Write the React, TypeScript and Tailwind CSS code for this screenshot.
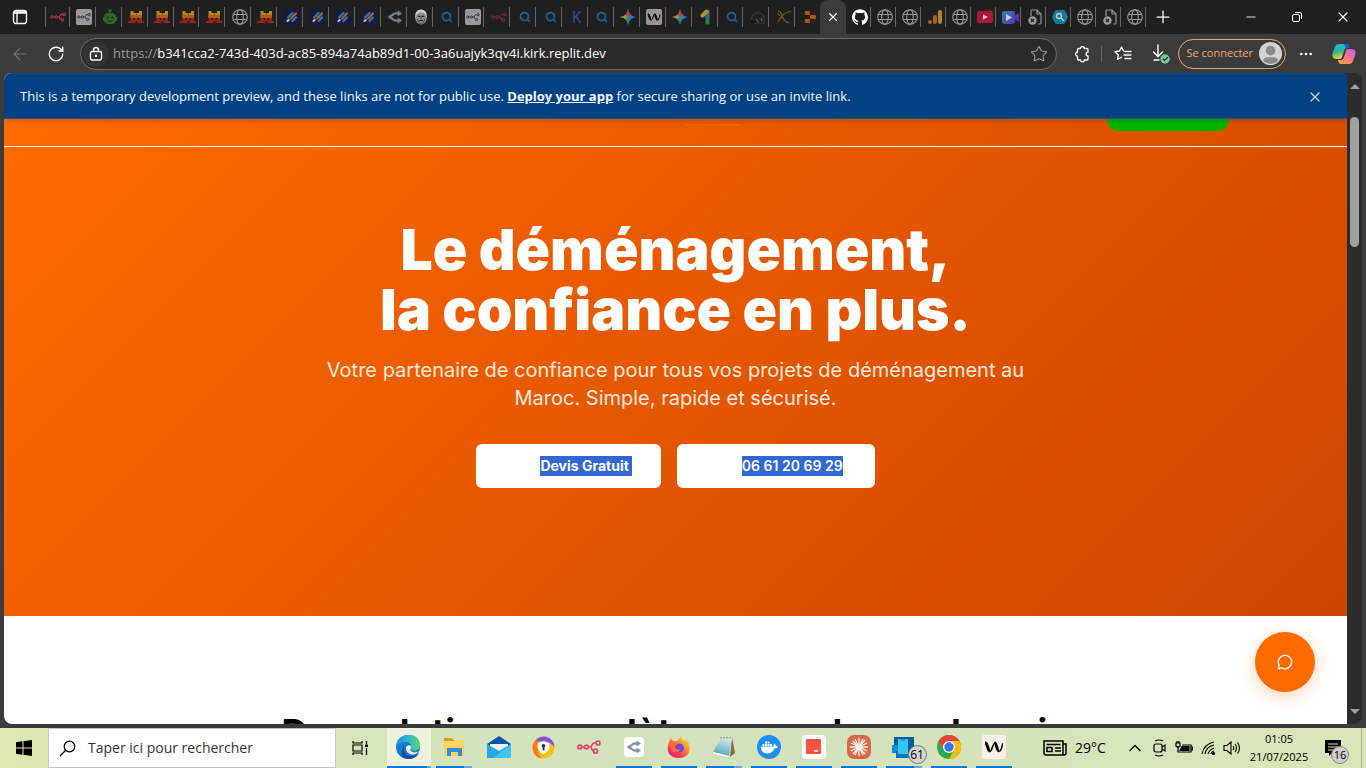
import React from "react";
import {
  ArrowLeft, RotateCw, Star, X, Plus, Minus, Ellipsis, Search, Globe, ChevronUp, MessageCircle,
} from "lucide-react";
import { SiGithub } from "react-icons/si";

type IconProps = { className?: string };

const N8n = ({ className = "" }: IconProps) => (
  <svg viewBox="0 0 24 14" fill="none" stroke="currentColor" strokeWidth="1.7" className={className}>
    <circle cx="2.800" cy="7" r="1.900" /><circle cx="9.500" cy="7" r="1.900" />
    <circle cx="21" cy="3" r="2" /><circle cx="18.500" cy="11.200" r="2" />
    <path d="M4.700 7h2.900M11.400 7h2c1.500 0 1.200-4 3.600-4h2M13.400 7c1.500 0 1.200 4 3.100 4.200" />
  </svg>
);

const Robot = () => (
  <svg viewBox="0 0 16 16" className="size-4 text-[#2e6b1f]" fill="currentColor">
    <path d="M7.300 1h1.400v4H7.300z" /><circle cx="8" cy="1.500" r="1.500" />
    <rect x="2" y="4" width="12" height="11" rx="4.500" /><path d="M1 8h2v4H1zM13 8h2v4h-2z" />
    <circle cx="5.500" cy="8.500" r="1" fill="#202020" /><circle cx="10.500" cy="8.500" r="1" fill="#202020" />
    <path d="M5.500 11.500q2.500 2 5 0" stroke="#202020" fill="none" />
  </svg>
);

const Pixel = () => (
  <svg viewBox="0 0 16 14" className="h-3.5 w-4">
    <path d="M2.500 1h3v2H8v2h.5V3H11V1h3v7H2.500z" fill="#b58a1a" />
    <path d="M2.500 5h11.500v3H2.500z" fill="#b0591a" />
    <path d="M2.500 8h3v2H7V8h2.500v2H11V8h3v3h2v2H9.500v-2h-2v2H0v-2h2.500z" fill="#98231a" />
  </svg>
);

const Stripes = () => (
  <svg viewBox="0 0 16 16" className="size-4">
    <rect width="16" height="16" fill="#171c3f" />
    <g strokeWidth="2.200" strokeLinecap="round">
      <path d="M4 8.500L8.500 4" stroke="#2b7ab8" /><path d="M7 9.500L12 4.500" stroke="#b9601f" />
      <path d="M8.500 12L12 8.500" stroke="#2b7ab8" /><path d="M3.500 12l1.200-1" stroke="#bbb" />
    </g>
  </svg>
);

const Fork = ({ className = "" }: IconProps) => (
  <svg viewBox="0 0 18 16" className={className} fill="none" stroke="currentColor" strokeWidth="2.600">
    <path d="M13 4H9.500C6.500 4 6 8 1.500 8 6 8 6.500 12 9.500 12H13" />
    <path d="M12 .5l5 3.500-5 3.500zM12 8.500l5 3.500-5 3.500z" fill="currentColor" stroke="none" />
  </svg>
);

const Face = () => (
  <svg viewBox="0 0 16 16" className="size-4">
    <ellipse cx="8" cy="8" rx="6" ry="7.500" fill="#8a8a8a" />
    <path d="M2.500 9Q1 1 8 .5 15 1 13.500 9L12 5Q9 2.500 5 4.500L3.500 6z" fill="#c8c8c8" />
    <path d="M4.800 7.300h2.500M8.800 7.300h2.500M6 12q2-1.500 4 0" stroke="#222" strokeWidth="1.200" fill="none" />
    <path d="M8 7v3.500M4 10q1 4 4 5.200M12 10q-1 4-4 5.200" stroke="#444" fill="none" />
  </svg>
);

const Lens = () => <Search className="size-3 text-[#1c629c]" strokeWidth={3.500} />;

const Spark = () => (
  <svg viewBox="0 0 16 16" className="size-4">
    <path d="M8 0q1 7 8 8-7 1-8 8-1-7-8-8 7-1 8-8" fill="#3a72bb" />
    <path d="M8 0q.7 4 3 6L8 7.500 5 6Q7.300 4 8 0" fill="#b04442" />
    <path d="M0 8q3.600-.6 5.500-2.300L7.500 8l-2 2.300Q3.600 8.600 0 8" fill="#a8932c" />
    <path d="M8 16q-.6-3.800-2.500-5.700L8 8.500l2.200 2Q8.600 12.400 8 16" fill="#2b8f4e" />
  </svg>
);

const Wave = ({ className = "" }: IconProps) => (
  <svg viewBox="0 0 20 12" className={className} fill="none" stroke="currentColor" strokeLinejoin="round">
    <path d="M1 2c3 0 2.500 8 5 8" strokeWidth="3" /><path d="M6 10.300C8 10 9 2 11 2" strokeWidth="1.500" />
    <path d="M10.500 2c2.500 0 2 8 4.500 8" strokeWidth="3" /><path d="M15 10.300c2 0 3-4 3.700-8" strokeWidth="1.500" />
  </svg>
);

const One = () => (
  <svg viewBox="0 0 16 16" className="size-4" fill="none" strokeWidth="4">
    <path d="M9.500 15.500V8" stroke="#25813d" /><path d="M9.500 8.500V1" stroke="#3468c0" /><path d="M4.500 6.500l4-4" stroke="#b5941c" strokeLinecap="round" />
  </svg>
);

const Hut = () => (
  <svg viewBox="0 0 16 16" className="size-4" fill="none" stroke="#3a3a34" strokeWidth="1.200">
    <path d="M2 11V7l6-4 6 4v7H4" /><path d="M6 10l2 3M11 9l1 3" stroke="#706822" /><path d="M1 12.500h5" stroke="#111" strokeWidth="2" />
  </svg>
);

const Bow = () => (
  <svg viewBox="0 0 16 16" className="size-4" fill="none" stroke="#7a551b" strokeWidth="1.200">
    <path d="M2 2q3 0 4 5c1 3 3 6 7 7M2 13L6 7q4-4 9-4.500M2 4l2 3" />
  </svg>
);

const Replit = () => (
  <svg viewBox="0 0 16 16" className="size-4" fill="#b9500f">
    <rect x="3" y="2" width="5" height="4" rx="1" /><rect x="8" y="6" width="6" height="4" rx="1" /><rect x="3" y="10" width="5" height="4" rx="1" />
  </svg>
);

const GlobeTab = () => (
  <svg viewBox="0 0 16 16" className="size-4" fill="none" stroke="#999" strokeWidth="1.100">
    <circle cx="8" cy="8" r="7.300" /><ellipse cx="8" cy="8" rx="3.300" ry="7.300" /><path d="M1.500 5.500h13M1.500 10.500h13" />
  </svg>
);

const Bars = () => (
  <svg viewBox="0 0 16 16" className="size-4">
    <circle cx="3" cy="13" r="2" fill="#a8611e" /><rect x="6" y="6" width="4" height="9" rx="2" fill="#a8611e" /><rect x="11" y="1" width="4" height="14" rx="2" fill="#b3831c" />
  </svg>
);

const Tube = () => (
  <svg viewBox="0 0 16 12" className="h-3 w-4"><rect width="16" height="12" rx="2" fill="#a81733" /><path d="M6 3.500l5 2.500-5 2.500z" fill="#ccc" /></svg>
);

const Clip = () => (
  <svg viewBox="0 0 18 16" className="h-4 w-5">
    <defs><linearGradient id="clip" x1="0" y1="0" x2="1" y2="1"><stop stopColor="#1d8aa5" /><stop offset="1" stopColor="#5a30b5" /></linearGradient></defs>
    <rect x="1" y="2" width="13" height="13" rx="3" fill="url(#clip)" /><path d="M13 7l5-3v9l-5-3z" fill="#5a2fae" /><path d="M5 5l6 3.500L5 12z" fill="#ccc" />
  </svg>
);

const BrokenDoc = () => (
  <svg viewBox="0 0 16 16" className="size-4" fill="none" stroke="#909090" strokeWidth="1.200">
    <path d="M4 7V2q0-1 1-1h5l4 4v9q0 1-1 1h-2M10 1v4h4" /><circle cx="5.500" cy="11.500" r="4.200" fill="#999" stroke="none" />
    <path d="M4 10l3 3M7 10l-3 3" stroke="#202020" />
  </svg>
);

const HexSearch = () => (
  <svg viewBox="0 0 16 16" className="size-4" fill="none">
    <path d="M4.500 1h7q1 0 1.500 1l3 6-3 6q-.5 1-1.500 1h-7q-1 0-1.500-1L0 8l3-6q.5-1 1.500-1" fill="#157c98" /><circle cx="7" cy="7" r="2.500" stroke="#ccc" strokeWidth="1.300" /><path d="M9 9l3 3" stroke="#ccc" strokeWidth="1.300" />
  </svg>
);

const N8nTile = () => <span className="flex size-4 items-center justify-center rounded-xs bg-[#999]"><N8n className="h-2 w-3.5 text-[#334]" /></span>;
const LetterK = () => <span className="text-base leading-4 text-[#2a509e]">K</span>;
const WTile = () => <span className="flex size-4 items-center justify-center rounded-xs bg-[#9a9591]"><Wave className="h-2.5 w-3.5 text-black" /></span>;
const N8nRed = () => <N8n className="h-2.5 w-4 text-[#bb2e54]" />;
const N8nDim = () => <N8n className="h-2.5 w-4 text-[#7a2a40]" />;
const ForkTab = () => <Fork className="h-4 w-4 text-[#767b84]" />;
const Hub = () => <SiGithub className="size-4 text-white" />;

const leftTabs = [
  N8nRed, N8nTile, Robot, Pixel, Pixel, Pixel, Pixel, GlobeTab, Pixel, Stripes, Stripes, Stripes, Stripes, ForkTab, Face,
  Lens, N8nTile, N8nDim, Lens, Lens, LetterK, Lens, Spark, WTile, Spark, One, Lens, Hut, Bow, Replit,
];
const rightTabs = [Hub, GlobeTab, GlobeTab, Bars, GlobeTab, Tube, Clip, BrokenDoc, HexSearch, GlobeTab, BrokenDoc, GlobeTab];

const Copilot = () => (
  <svg viewBox="0 0 24 22" className="h-5.5 w-6">
    <defs>
      <linearGradient id="cpa" x1="0" y1="0" x2=".3" y2="1"><stop stopColor="#1ab3f5" /><stop offset=".55" stopColor="#2fb58f" /><stop offset="1" stopColor="#f0cf24" /></linearGradient>
      <linearGradient id="cpb" x1="1" y1="0" x2=".3" y2="1"><stop stopColor="#b561ee" /><stop offset=".5" stopColor="#f36b9b" /><stop offset="1" stopColor="#fb9a50" /></linearGradient>
    </defs>
    <path d="M7 1h8c2 0 2.500 2 3 4h-3c-2 0-2.500 1-3 3l-2 6c-.5 2-1.500 2-3 2H4c-4 0-4-4-3-7l2-5c.7-2 2-3 4-3" fill="url(#cpa)" />
    <path d="M12 1h3c2 0 2.500 2 3 4h-4z" fill="#2357ca" />
    <path d="M17 21H9c-2 0-2.500-2-3-4h3c2 0 2.500-1 3-3l2-6c.5-2 1.500-2 3-2h3c4 0 4 4 3 7l-2 5c-.7 2-2 3-4 3" fill="url(#cpb)" />
  </svg>
);

function TabStrip() {
  return (
    <div className="flex h-[34px] shrink-0 items-stretch bg-[#202020] text-white">
      <button aria-label="Tab actions" className="flex w-11 items-center justify-center pr-1">
        <svg viewBox="0 0 16 16" className="size-4" fill="none" stroke="white" strokeWidth="1.300">
          <rect x="1.500" y="1.500" width="13" height="13" rx="2.500" /><path d="M2 3h12M2 4h12M5 4v10" />
        </svg>
      </button>
      <div className="flex min-w-0 flex-[776] items-center border-l border-transparent">
        {leftTabs.map((Icon, i) => (
          <button key={i} aria-label={"Tab " + (i + 1)} className={i === 0 ? "flex h-5 min-w-0 flex-1 items-center justify-center border-x border-[#666] pl-0.5" : i === 29 ? "flex h-5 min-w-0 flex-1 items-center justify-center pl-1" : "flex h-5 min-w-0 flex-1 items-center justify-center border-r border-[#666] pl-1"}>
            <Icon />
          </button>
        ))}
      </div>
      <button aria-label="Close tab" className="flex w-[26px] items-center justify-center rounded-t-lg bg-[#3b3b3b]"><X className="size-3.5" strokeWidth={2} /></button>
      <div className="flex min-w-0 flex-[300] items-center">
        {rightTabs.map((Icon, i) => (
          <button key={i} aria-label={"Tab " + (i + 32)} className="flex h-5 min-w-0 flex-1 items-center justify-center border-r border-[#666] pl-1"><Icon /></button>
        ))}
      </div>
      <button aria-label="New tab" className="flex w-[34px] items-center justify-center"><Plus className="size-5 shrink-0" strokeWidth={1.500} /></button>
      <div className="ml-12 flex">
        <button aria-label="Minimize" className="flex w-[46px] items-center justify-center"><Minus className="size-3.5" strokeWidth={1.500} /></button>
        <button aria-label="Restore" className="flex w-[46px] items-center justify-center">
          <svg viewBox="0 0 12 12" className="size-3" fill="none" stroke="white"><rect x="1.500" y="3.500" width="7" height="7" rx="1.500" /><path d="M4 1.500h5q1.500 0 1.500 1.500v5" /></svg>
        </button>
        <button aria-label="Close" className="flex w-[46px] items-center justify-center"><X className="size-4" strokeWidth={1.700} /></button>
      </div>
    </div>
  );
}

function Toolbar() {
  return (
    <div className="flex h-[39px] shrink-0 items-center bg-[#3b3b3b] text-white">
      <button aria-label="Back" className="flex w-10 justify-center text-[#777]"><ArrowLeft className="size-5" strokeWidth={1.300} /></button>
      <button aria-label="Refresh" className="flex w-8 justify-center"><RotateCw className="size-[18px]" strokeWidth={1.800} /></button>
      <div className="ml-2 flex h-8 min-w-0 flex-1 items-center rounded-full border border-[#6c6c6c] bg-[#2a2a2a] pr-2 pl-0.5">
        <span className="flex size-[26px] shrink-0 items-center justify-center rounded-full bg-[#333]">
          <svg viewBox="0 0 14 16" className="h-4 w-3.5" fill="none" stroke="white" strokeWidth="1.300"><rect x="1.500" y="5.500" width="11" height="8.500" rx="1.500" /><path d="M4.500 5V4a2.500 2.500 0 0 1 5 0v1" /><circle cx="7" cy="9.700" r=".6" fill="white" /></svg>
        </span>
        <label htmlFor="url" className="pl-1 text-[13px] text-[#999]">https://</label>
        <input id="url" className="min-w-0 flex-1 bg-transparent text-[13px] font-medium outline-none" defaultValue="b341cca2-743d-403d-ac85-894a74ab89d1-00-3a6uajyk3qv4i.kirk.replit.dev" />
        <button aria-label="Add to favorites"><Star className="size-[18px] text-[#999]" strokeWidth={1.400} /></button>
      </div>
      <button aria-label="Extensions" className="ml-4 flex">
        <svg viewBox="0 0 18 18" className="size-[18px]" fill="none" stroke="white" strokeWidth="1.300" strokeLinejoin="round">
          <path d="M5.500 3.500h2a1.900 1.900 0 0 1 3.800 0H14q1 0 1 1v2.700a1.900 1.900 0 0 0 0 3.800v3q0 1-1 1h-2.700a1.900 1.900 0 0 1-3.800 0h-2q-1 0-1-1V11a1.900 1.900 0 1 1 0-3.800V4.500q0-1 1-1z" />
        </svg>
      </button>
      <span className="ml-2.5 h-4 w-px bg-[#666]" />
      <button aria-label="Favorites" className="ml-3 flex">
        <svg viewBox="0 0 18 18" className="size-[18px]" fill="none" stroke="white" strokeWidth="1.300" strokeLinejoin="round" strokeLinecap="round">
          <path d="M11 6.500L9.500 6 7.500 2l-2 4-4.500.700L4.300 10l-.8 4.500 4-2.200M11.500 6.500H17M10 10h7M11 13.500h6" />
        </svg>
      </button>
      <button aria-label="Downloads" className="ml-5 flex">
        <svg viewBox="0 0 18 20" className="h-5 w-[18px]" fill="none" stroke="white" strokeWidth="1.400" strokeLinecap="round">
          <path d="M6 1v11M1.500 8L6 12.500 10.500 8M2 16h5" /><circle cx="13" cy="15" r="4.700" fill="#79c694" stroke="none" /><path d="M11 15l1.500 1.500L15.500 13.500" stroke="#234" strokeWidth="1.200" />
        </svg>
      </button>
      <button className="ml-2 flex h-[30px] items-center gap-1.5 rounded-full border border-[#f5a468] pr-[3px] pl-2 text-[11px] font-medium text-[#f5a468]">
        Se connecter
        <svg viewBox="0 0 24 24" className="size-[23px]"><circle cx="12" cy="12" r="12" fill="#d5d3d1" /><circle cx="12" cy="9" r="5" fill="#8c8a88" /><path d="M4.500 20q0-4 4-4h7q4 0 4 4-7 6-15 0" fill="#8c8a88" /></svg>
      </button>
      <button aria-label="Settings and more" className="ml-3"><Ellipsis className="size-4" strokeWidth={2} /></button>
      <button aria-label="Copilot" className="mr-2.5 ml-[18px]"><Copilot /></button>
    </div>
  );
}

function Page() {
  return (
    <main className="flex min-w-0 flex-1 flex-col overflow-hidden rounded-tl-lg rounded-bl-lg bg-white font-['Inter',sans-serif]">
      <div className="z-10 flex h-[46px] shrink-0 items-center justify-between border-b border-[#1d5087] bg-[#004182] pt-0.5 pr-6 pl-4 font-['Open_Sans',sans-serif] text-[13px] font-medium text-[#f5f9fc] shadow-md">
        <p>This is a temporary development preview, and these links are not for public use. <a href="#deploy" className="font-bold underline">Deploy your app</a> for secure sharing or use an invite link.</p>
        <button aria-label="Dismiss"><X className="size-4 text-[#c7d5e4]" strokeWidth={1.800} /></button>
      </div>
      <section className="flex h-[497px] shrink-0 flex-col bg-[linear-gradient(135deg,#ff6b00,#cc4400)]">
        <header className="flex h-7 shrink-0 items-start justify-end border-b border-white pr-[118px]">
          <span className="mt-[5px] mr-[366px] h-0.5 w-14 bg-[#f06510]" />
          <span className="h-3 w-[122px] rounded-b-[24px] bg-[#00b300]" />
        </header>
        <div className="flex flex-col items-center pt-[73px] text-center text-white">
          <h1 className="text-[57px] leading-[60px] font-black">Le déménagement,<br />la confiance en plus.</h1>
          <p className="mt-4 max-w-3xl text-xl leading-7 text-[#ffeadd]">Votre partenaire de confiance pour tous vos projets de déménagement au<br />Maroc. Simple, rapide et sécurisé.</p>
          <div className="mt-8 flex gap-4 text-sm leading-5 font-bold">
            <button className="h-11 rounded-md bg-white pr-[29px] pl-16"><span className="inline-block bg-[#3367d1] pr-[3px]">Devis Gratuit</span></button>
            <button className="h-11 rounded-md bg-white pr-8 pl-[65px] font-semibold"><span className="inline-block bg-[#3367d1]">06 61 20 69 29</span></button>
          </div>
        </div>
      </section>
      <section className="relative min-h-0 flex-1 overflow-hidden pt-24 text-center">
        <h2 className="text-4xl leading-10 font-bold text-black">Des solutions complètes pour chaque besoin</h2>
        <button aria-label="Chat" className="absolute top-4 right-8 flex size-[60px] items-center justify-center rounded-full bg-[#ff6b00] text-white shadow-[0_4px_16px_rgba(255,107,0,0.3)]"><MessageCircle className="size-4" strokeWidth={2} /></button>
      </section>
    </main>
  );
}

const Edge = () => (
  <svg viewBox="0 0 24 24" className="size-6">
    <defs><linearGradient id="edge"><stop stopColor="#218ddd" /><stop offset=".5" stopColor="#27b8d1" /><stop offset="1" stopColor="#5fd660" /></linearGradient></defs>
    <circle cx="12" cy="12" r="12" fill="#147bd1" />
    <path d="M0 12C1-4 24-4 24 10c0 5-5 7-9 5-2-1 0-2 0-4 0-5-11-6-15 1" fill="url(#edge)" />
    <path d="M9 11c-4 5 2 11 8 10 3 0 5-2 6-3-2 4-6 6-11 6-8-1-8-10-3-13" fill="#104b94" />
    <path d="M10 13c0-3 5-4 5-1 0 2-1 2-1 3 2 3 6 3 9 1-4 6-13 4-13-3" fill="#eef3df" />
  </svg>
);
const Explorer = () => (
  <svg viewBox="0 0 22 20" className="h-5 w-[22px]"><path d="M1 1h8l2 2h10v5H1z" fill="#d99c13" /><path d="M1 4h9l2-1h9v16H1z" fill="#ffd467" /><path d="M4 11h15v8h-4v-4H8v4H4z" fill="#368cd8" /></svg>
);
const Mail = () => (
  <svg viewBox="0 0 24 22" className="h-[22px] w-6"><path d="M0 8L12 0l12 8v4H0z" fill="#0757a2" /><path d="M3 8h18v5l-9 4-9-4z" fill="#edf3f6" /><path d="M0 8l12 7 12-7v14H0z" fill="#27a6ea" /><path d="M24 8L6 22h18z" fill="#43c3f8" /></svg>
);
const Shield = () => (
  <svg viewBox="0 0 24 24" className="size-[23px]"><circle cx="12" cy="12" r="11.500" fill="#fbbd19" /><path d="M5 3Q-2 9 2 18q3 5 8 5.400Q5 18 6 6z" fill="#ff7a1c" /><path d="M5 3q4-3 9-2.400 9 2 9.500 11Q18 4 5 6z" fill="#8054e8" /><path d="M12 5.500l6 2q1.500 8-6 11.500-7.500-3.500-6-11.500z" fill="white" /><path d="M12 10v5" stroke="#213557" strokeWidth="2" /><circle cx="12" cy="10.300" r="1.900" fill="#213557" /></svg>
);
const Firefox = () => (
  <svg viewBox="0 0 24 24" className="size-6">
    <defs><linearGradient id="fox" x1="1" y1="0" x2=".2" y2="1"><stop stopColor="#fff044" /><stop offset=".4" stopColor="#ff982f" /><stop offset=".75" stopColor="#ff3b52" /><stop offset="1" stopColor="#e01587" /></linearGradient></defs>
    <path d="M2 7l2-4 2 3 4 0 4-5q1 4 4 5l1-2c7 8 4 19-7 19S-1 15 2 7" fill="url(#fox)" /><circle cx="12.500" cy="13" r="4.500" fill="#7545df" /><path d="M3 7l8 2-4 2q2 5 7 3-4 6-9 2-3-3-2-9" fill="#ff6c32" />
  </svg>
);
const Notepad = () => (
  <svg viewBox="0 0 24 24" className="size-6">
    <defs><linearGradient id="pad" x1=".6" y1="0" x2=".3" y2="1"><stop stopColor="#cfeaea" /><stop offset="1" stopColor="#4fa3b3" /></linearGradient></defs>
    <path d="M20 2l3 16-5 4z" fill="#85714c" /><path d="M9 3h11l-3 18-16-4z" fill="url(#pad)" /><path d="M1 17l16 4v1.300L1 18.500z" fill="white" /><path d="M9 2v1.500m3-1.500v1.500m3-1.500v1.500m3-1.500v1.500" stroke="#777" />
  </svg>
);
const Docker = () => (
  <svg viewBox="0 0 24 24" className="size-6"><circle cx="12" cy="12" r="12" fill="#1d8ff0" /><path d="M4 11.500h12.500q-.5-2 1-3 1.500 1 1.300 2.700 1.400-.2 2.200.3-.8 2-3.500 2Q15 19 9.500 18.500 4 18 4 11.500M5.500 9h2v2h-2zM8 9h2v2H8zM10.500 9h2v2h-2zM13 9h2v2h-2zM8 6.500h2v2H8zM10.500 6.500h2v2h-2z" fill="white" /></svg>
);
const RedBox = () => <svg viewBox="0 0 24 24" className="size-6"><rect width="24" height="24" rx="4" fill="white" /><rect x="4" y="4" width="15" height="15" rx="1" fill="#ff5240" /><path d="M12 16h4" stroke="white" strokeWidth="1.500" /></svg>;
const Claude = () => (
  <svg viewBox="0 0 24 24" className="size-6"><rect width="24" height="24" rx="7" fill="#d66b4b" /><path d="M12 3v18M3 12h18M6 6l12 13M18 5L6 19M8 4l8 16M16 4L8 20M4 8l16 8M4 16l16-8" stroke="#fff0e8" strokeWidth="1.300" /></svg>
);
const Phone = () => (
  <span className="relative"><svg viewBox="0 0 24 24" className="size-6"><path d="M2 2h20v16H2z" fill="#075f9f" /><path d="M0 10h7v8H0z" fill="#178bd3" /><path d="M4 16h13v7H4z" fill="#0871b8" /><rect x="6" y="4" width="10" height="15" fill="#35c6f0" /><path d="M9 5h4" stroke="#086ba4" /></svg><span className="absolute top-2.5 left-4 flex size-[19px] items-center justify-center rounded-full border border-[#777] bg-[#d3d3d3] text-xs font-medium">61</span></span>
);
const Chrome = () => (
  <svg viewBox="0 0 24 24" className="size-6"><circle cx="12" cy="12" r="12" fill="#31a653" /><path d="M1.600 6a12 12 0 0 1 20.800 0H12L7 15z" fill="#e94335" /><path d="M22.400 6A12 12 0 0 1 12 24l5-9-5-9z" fill="#fbbc05" /><circle cx="12" cy="12" r="6" fill="white" /><circle cx="12" cy="12" r="4.700" fill="#3478e9" /></svg>
);
const N8nApp = () => <N8n className="h-3.5 w-6 text-[#e4476d]" />;
const ForkApp = () => <span className="flex size-5 items-center justify-center rounded-sm bg-white"><Fork className="h-3.5 w-4 text-[#8492a8]" /></span>;
const WApp = () => <span className="flex size-6 items-center justify-center rounded-xs bg-[#faf0e8]"><Wave className="h-3 w-5 text-black" /></span>;

const apps = [
  { name: "Explorateur", Icon: Explorer, open: true, many: true }, { name: "Courrier", Icon: Mail }, { name: "Sécurité", Icon: Shield },
  { name: "n8n", Icon: N8nApp }, { name: "Flux", Icon: ForkApp, open: true }, { name: "Firefox", Icon: Firefox, open: true },
  { name: "Bloc-notes", Icon: Notepad, open: true, many: true }, { name: "Docker", Icon: Docker, open: true }, { name: "Notes", Icon: RedBox, open: true },
  { name: "Claude", Icon: Claude, open: true }, { name: "Téléphone", Icon: Phone, open: true, many: true }, { name: "Chrome", Icon: Chrome, open: true }, { name: "W", Icon: WApp, open: true },
];

function Taskbar() {
  return (
    <footer className="flex h-10 shrink-0 items-stretch bg-[linear-gradient(90deg,#dce8b0,#d2e2bf_45%,#d8e5b7)] text-black">
      <button aria-label="Démarrer" className="flex w-12 items-center justify-center"><svg viewBox="0 0 16 16" className="size-4"><path d="M0 2.200L6.500 1.300V7.500H0zM7.500 1.200L16 0v7.500H7.500zM0 8.500h6.500v6.200L0 13.800zM7.500 8.500H16V16l-8.500-1.200z" /></svg></button>
      <div className="flex w-72 items-center gap-3 border border-[#c4c8c4] bg-white pl-2.5">
        <label htmlFor="search" aria-label="Rechercher">
          <svg viewBox="0 0 17 17" className="size-[17px]" fill="none" stroke="black" strokeWidth="1.300"><circle cx="10.500" cy="6.500" r="5.300" /><path d="M6.700 10.300L.8 16.200" /></svg>
        </label>
        <input id="search" className="min-w-0 flex-1 text-sm outline-none placeholder:text-[#333]" placeholder="Taper ici pour rechercher" />
      </div>
      <button aria-label="Vue des tâches" className="flex w-[51px] items-center justify-center pr-1">
        <svg viewBox="0 0 16 16" className="size-4" fill="none" stroke="black" strokeWidth="1.200"><path d="M1 1v2h9V1M1 15v-2h9v2M1 5h9v6H1zM14.500 1v3M14.500 8v7" /><path d="M13 4.500h3v2.500h-3z" fill="black" stroke="none" /></svg>
      </button>
      <button aria-label="Microsoft Edge" className="flex w-11 flex-col items-center bg-[#edf2df]"><span className="flex flex-1 items-center pr-0.5"><Edge /></span><span className="flex h-0.5 w-full bg-[#68a9df] pr-1"><span className="w-full bg-[#0078d7]" /></span></button>
      {apps.map(({ name, Icon, open, many }) => (
        <button key={name} aria-label={name} className="flex w-[45px] flex-col items-center">
          <span className="flex flex-1 items-center"><Icon /></span>
          <span className={open ? "flex h-0.5 w-9 bg-[#0078d7]" : "flex h-0.5 w-9"}>{many && <span className="ml-auto w-2 bg-[#68a9df]" />}</span>
        </button>
      ))}
      <div className="ml-auto flex items-center text-sm">
        <svg viewBox="0 0 24 16" className="h-4 w-6" fill="none" stroke="black" strokeWidth="1.500"><path d="M1 1h19v14H3q-2 0-2-2zM20 4h3v9q0 2-2 2h-3M3.500 4.500h14M12 8h6M12 11h6" /><path d="M4 7.500h5v4H4z" /></svg>
        <span className="w-[58px] pl-2">29°C</span>
        <ChevronUp className="size-5" strokeWidth={1.500} />
        <svg viewBox="0 0 14 18" className="ml-2 h-[18px] w-3.5" fill="none" stroke="black" strokeWidth="1.200"><rect x="1" y="5" width="8" height="8" rx="2" /><path d="M9 8l3-2v6l-3-2M2 2q4-2 8 0M2 16q4 2 8 0" /></svg>
        <svg viewBox="0 0 18 14" className="ml-2 h-3.5 w-[18px]" fill="none" stroke="black" strokeWidth="1.200"><path d="M1 2v3q2 2 4 0V2zM2 0v2M4 0v2M3 6v5h13V4H7M16 6h1.500v3H16" /><path d="M7 5.500h7v4H5z" fill="black" /></svg>
        <svg viewBox="0 0 16 16" className="ml-2 size-4" fill="none" stroke="black" strokeWidth="1.100"><path d="M1 14Q3 4 13 2M4 14q1-7 9-9M7 14q1-4 6-6M10 14q0-2 3-3" /><circle cx="12.500" cy="13.500" r="1" fill="black" /></svg>
        <svg viewBox="0 0 18 16" className="ml-1.5 h-4 w-[18px]" fill="none" stroke="black" strokeWidth="1.100"><path d="M1 5.500h3L8 2v12L4 10.500H1zM10 6q1.500 2 0 4M12 4q3 4 0 8M14.500 2.500q4 5.500 0 11" /></svg>
        <time className="ml-2 w-[60px] text-center text-[11px] leading-[18px]">01:05<br />21/07/2025</time>
        <button aria-label="Notifications" className="relative ml-4 flex"><svg viewBox="0 0 16 16" className="size-4"><path d="M0 0h16v13H7l-3 3v-3H0z" /><path d="M3 4h10M3 7h10M3 10h6" stroke="#dce8bb" /></svg><span className="absolute top-1.5 left-1.5 flex size-[18px] items-center justify-center rounded-full border border-[#888] bg-[#cfcfcf] text-[11px] font-medium">16</span></button>
        <span className="mr-1 ml-5 h-10 w-px bg-[#a6b38f]" />
      </div>
    </footer>
  );
}

export default function App() {
  return (
    <div className="flex h-screen flex-col overflow-hidden bg-[#3b3b3b] font-['Open_Sans',sans-serif]">
      <TabStrip />
      <Toolbar />
      <div className="flex min-h-0 flex-1 px-1 pb-1">
        <Page />
        <div className="flex w-[15px] shrink-0 flex-col items-center rounded-r-lg bg-[#2c2c2c] pt-[11px] pb-[9px]">
          <svg viewBox="0 0 10 6" className="h-1.5 w-2.5" fill="#9f9f9f"><path d="M5 0l5 5H0z" /></svg>
          <span className="mt-[27px] h-[130px] w-[9px] rounded-full bg-[#9f9f9f]" />
          <svg viewBox="0 0 10 6" className="mt-auto h-1.5 w-2.5" fill="#9f9f9f"><path d="M0 0h10L5 5z" /></svg>
        </div>
      </div>
      <Taskbar />
    </div>
  );
}
